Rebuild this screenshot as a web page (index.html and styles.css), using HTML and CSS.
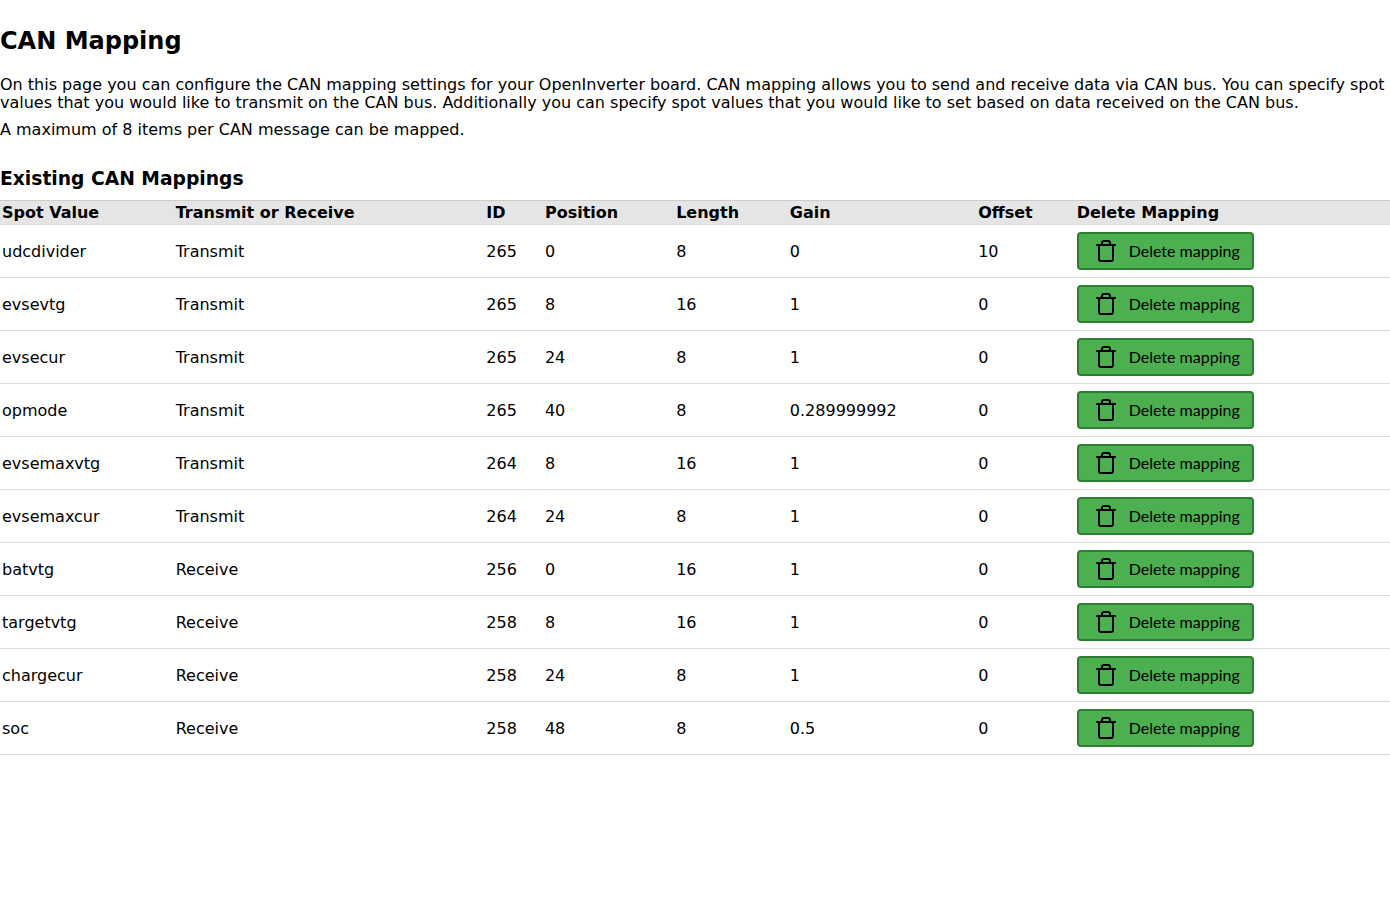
FILE: index.html
```html
<!DOCTYPE html>
<html lang="en">
<head>
<meta charset="utf-8">
<title>CAN Mapping</title>
<link rel="stylesheet" href="styles.css">
</head>
<body>
<svg class="defs" width="0" height="0" aria-hidden="true">
<symbol id="trash" viewBox="0 0 24 24"><path d="M3 6h18M5 6v14a2 2 0 0 0 2 2h10a2 2 0 0 0 2-2V6M8 6V4a2 2 0 0 1 2-2h4a2 2 0 0 1 2 2v2" fill="none" stroke="currentColor" stroke-width="2" stroke-linecap="round" stroke-linejoin="round"/></symbol>
</svg>
<h2 class="title">CAN Mapping</h2>
<p class="intro">On this page you can configure the CAN mapping settings for your OpenInverter board. CAN mapping allows you to send and receive data via CAN bus. You can specify spot values that you would like to transmit on the CAN bus. Additionally you can specify spot values that you would like to set based on data received on the CAN bus.</p>
<p class="note">A maximum of 8 items per CAN message can be mapped.</p>
<h3 class="subtitle">Existing CAN Mappings</h3>
<table class="map">
<thead><tr><th>Spot Value</th><th>Transmit or Receive</th><th>ID</th><th>Position</th><th>Length</th><th>Gain</th><th>Offset</th><th>Delete Mapping</th></tr></thead>
<tbody>
<tr><td>udcdivider</td><td>Transmit</td><td>265</td><td>0</td><td>8</td><td>0</td><td>10</td><td><button class="del"><svg class="ico"><use href="#trash"/></svg><span>Delete mapping</span></button></td></tr>
<tr><td>evsevtg</td><td>Transmit</td><td>265</td><td>8</td><td>16</td><td>1</td><td>0</td><td><button class="del"><svg class="ico"><use href="#trash"/></svg><span>Delete mapping</span></button></td></tr>
<tr><td>evsecur</td><td>Transmit</td><td>265</td><td>24</td><td>8</td><td>1</td><td>0</td><td><button class="del"><svg class="ico"><use href="#trash"/></svg><span>Delete mapping</span></button></td></tr>
<tr><td>opmode</td><td>Transmit</td><td>265</td><td>40</td><td>8</td><td>0.289999992</td><td>0</td><td><button class="del"><svg class="ico"><use href="#trash"/></svg><span>Delete mapping</span></button></td></tr>
<tr><td>evsemaxvtg</td><td>Transmit</td><td>264</td><td>8</td><td>16</td><td>1</td><td>0</td><td><button class="del"><svg class="ico"><use href="#trash"/></svg><span>Delete mapping</span></button></td></tr>
<tr><td>evsemaxcur</td><td>Transmit</td><td>264</td><td>24</td><td>8</td><td>1</td><td>0</td><td><button class="del"><svg class="ico"><use href="#trash"/></svg><span>Delete mapping</span></button></td></tr>
<tr><td>batvtg</td><td>Receive</td><td>256</td><td>0</td><td>16</td><td>1</td><td>0</td><td><button class="del"><svg class="ico"><use href="#trash"/></svg><span>Delete mapping</span></button></td></tr>
<tr><td>targetvtg</td><td>Receive</td><td>258</td><td>8</td><td>16</td><td>1</td><td>0</td><td><button class="del"><svg class="ico"><use href="#trash"/></svg><span>Delete mapping</span></button></td></tr>
<tr><td>chargecur</td><td>Receive</td><td>258</td><td>24</td><td>8</td><td>1</td><td>0</td><td><button class="del"><svg class="ico"><use href="#trash"/></svg><span>Delete mapping</span></button></td></tr>
<tr><td>soc</td><td>Receive</td><td>258</td><td>48</td><td>8</td><td>0.5</td><td>0</td><td><button class="del"><svg class="ico"><use href="#trash"/></svg><span>Delete mapping</span></button></td></tr>
</tbody>
</table>
</body>
</html>
```
FILE: styles.css
```css
* { box-sizing: border-box; }
html, body { margin: 0; background: #fff; }
body { font-family: "DejaVu Sans", sans-serif; font-size: 16px; line-height: 18px; color: #000; }
.defs { position: absolute; }
.title { font-size: 24px; line-height: 28px; font-weight: 700; margin: 0; padding-top: 27px; }
.intro { margin: 21px 0 0; }
.note { margin: 9px 0 0; }
.subtitle { font-size: 18.72px; line-height: 22px; font-weight: 700; margin: 29px 0 0; }
.map { width: 100%; border-collapse: collapse; margin-top: 10px; table-layout: auto; }
.map th { background: #e5e5e5; border-top: 1px solid #ccc; border-bottom: 1px solid #ddd; text-align: left; font-weight: 700; padding: 2px 2px 2px; height: 24px; }
.map td { border-bottom: 1px solid #ddd; padding: 9px 2px 7px; height: 53px; }
.map td:last-child { padding: 7px 7px 7px 1px; }
.map th:last-child { padding-left: 1px; }
.del { display: inline-flex; align-items: center; white-space: nowrap; width: 177px; height: 38px; padding: 0 10px 0 15px; gap: 11px; background: #4caf50; border: 2px solid #2e7d32; border-radius: 4px; color: #000; font-family: Lato, sans-serif; font-size: 16px; line-height: 18px; vertical-align: middle; }
.ico { width: 24px; height: 24px; flex: none; }
```
